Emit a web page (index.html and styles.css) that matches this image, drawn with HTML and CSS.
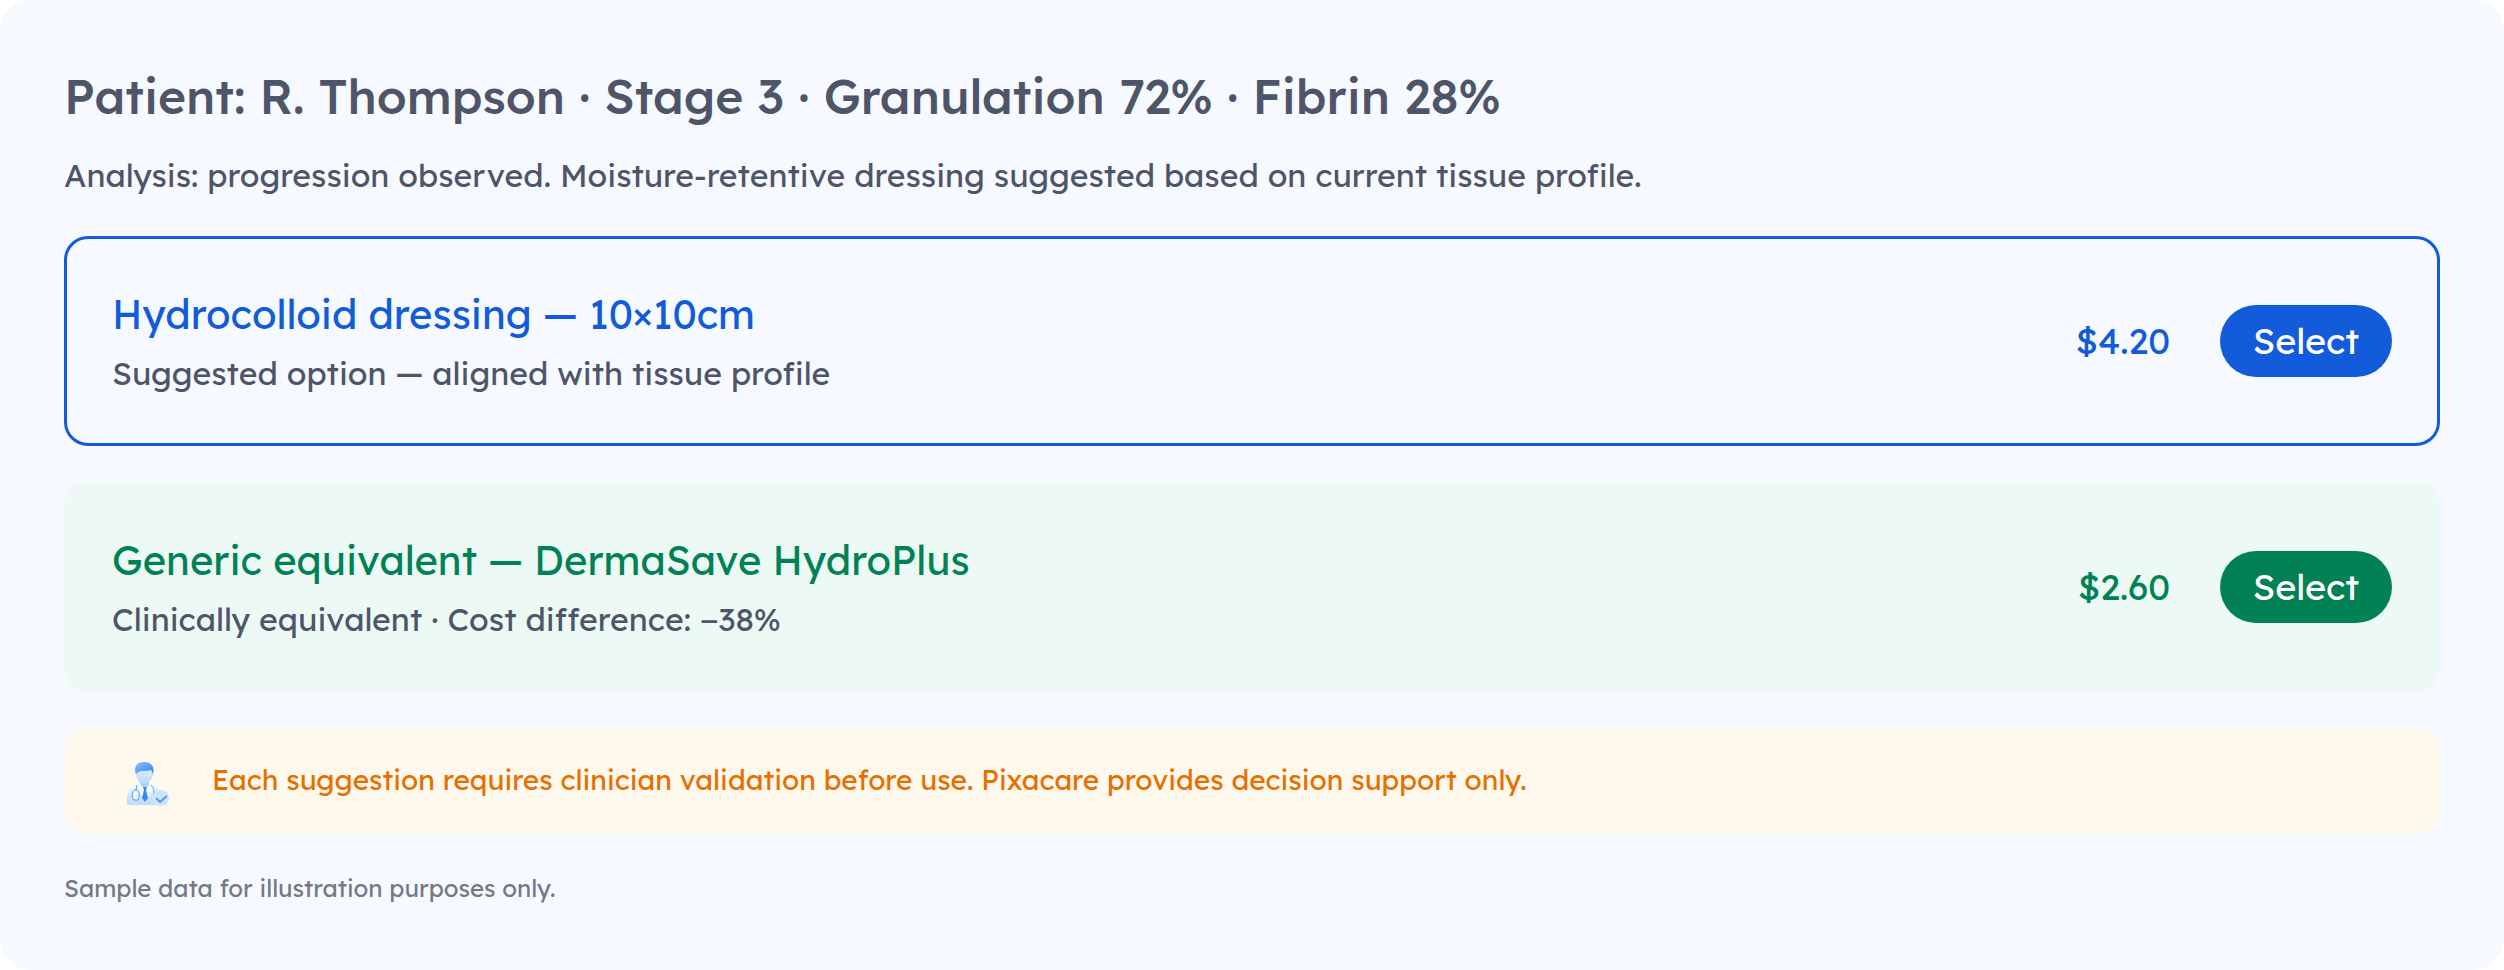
FILE: index.html
```html
<!DOCTYPE html>
<html lang="en">
<head>
  <meta charset="UTF-8" />
  <meta name="viewport" content="width=device-width, initial-scale=1.0"/>
  <title>Dressing suggestions</title>
  <link rel="stylesheet" href="styles.css">
</head>
<body>

  <main class="panel">
    <h1>Patient: R. Thompson · Stage 3 · Granulation 72% · Fibrin 28%</h1>
    <p class="analysis">Analysis: progression observed. Moisture-retentive dressing suggested based on current tissue profile.</p>

    <div class="options">
      <section class="option suggested">
        <div class="details">
          <h2>Hydrocolloid dressing — 10×10cm</h2>
          <p>Suggested option — aligned with tissue profile</p>
        </div>
        <span class="price">$4.20</span>
        <button type="button">Select</button>
      </section>

      <section class="option generic">
        <div class="details">
          <h2>Generic equivalent — DermaSave HydroPlus</h2>
          <p>Clinically equivalent · Cost difference: −38%</p>
        </div>
        <span class="price">$2.60</span>
        <button type="button">Select</button>
      </section>

      <div class="notice">
        <svg class="doctor" viewBox="0 0 44 44" aria-hidden="true">
          <defs>
            <linearGradient id="hair" x1="0" y1="0" x2="1" y2="1">
              <stop offset="0" stop-color="#8cc0ff"/>
              <stop offset="1" stop-color="#2f80f5"/>
            </linearGradient>
            <linearGradient id="skin" x1="0" y1="0" x2="0" y2="1">
              <stop offset="0" stop-color="#e8f3ff"/>
              <stop offset="1" stop-color="#b4d8ff"/>
            </linearGradient>
            <linearGradient id="coat" x1="0" y1="0" x2="0" y2="1">
              <stop offset="0" stop-color="#eaf4ff"/>
              <stop offset="1" stop-color="#bbdcff"/>
            </linearGradient>
          </defs>
          <path d="M1 43C0 34 2 27 8 25l7-3h8l7 3c5 2 7 9 6 18z" fill="url(#coat)"/>
          <path d="M14 17h9v6l-4 4-5-4z" fill="#a5cfff"/>
          <path d="M10 11c0-5 3-8 8-8s9 3 9 8c1 0 1 4-1 4-1 4-4 7-8 7-5 0-8-5-8-11z" fill="url(#skin)"/>
          <path d="M10 12C7 5 11 0 18 0c7 0 11 4 9 12l-2-4c-4 2-11-1-15 4z" fill="url(#hair)"/>
          <path d="M14 22l5 5 5-5 2 7-7 10-7-10z" fill="#f4f9ff"/>
          <path d="M17 25h4l-1 3 2 8-3 4-3-4 2-8z" fill="#3988ef"/>
          <path d="M11 23l-1 5m15-5c3 3 3 6 3 10" fill="none" stroke="#65a6f5" stroke-width="1"/>
          <path d="M8 38c-3-3-2-10 2-10s4 7 2 10z" fill="#eef7ff" stroke="#4f99f2" stroke-width="1"/>
          <circle cx="35" cy="36" r="8" fill="#cde4ff"/>
          <path d="M30 36l4 4 7-6" fill="none" stroke="#5797e8" stroke-width="2"/>
        </svg>
        <p>Each suggestion requires clinician validation before use. Pixacare provides decision support only.</p>
      </div>
    </div>

    <p class="footnote">Sample data for illustration purposes only.</p>
  </main>

</body>
</html>
```

FILE: styles.css
```css
* {
  box-sizing: border-box;
}

body {
  margin: 0;
  background-color: white;
  font-family: Lexend, Inter, sans-serif;
  color: #4f5568;
}

h1, h2, p {
  margin: 0;
}

.panel {
  min-height: 100vh;
  padding: 64px 64px 60px;
  border-radius: 32px;
  background-color: #f6f9ff;
}

h1 {
  font-size: 48px;
  line-height: 64px;
  font-weight: 500;
}

.analysis {
  margin-top: 20px;
  font-size: 32px;
  line-height: 54px;
}

.options {
  display: flex;
  flex-direction: column;
  gap: 36px;
  margin-top: 34px;
}

.option {
  display: flex;
  align-items: center;
  padding: 45px;
  border: 3px solid transparent;
  border-radius: 24px;
}

.details {
  flex: 1;
}

.option h2 {
  margin-bottom: 4px;
  font-size: 40px;
  line-height: 60px;
  font-weight: 400;
}

.option p {
  font-size: 32px;
  line-height: 50px;
}

.price {
  margin-right: 50px;
  padding-bottom: 2px;
  font-size: 36px;
}

.option button {
  width: 172px;
  height: 72px;
  padding: 0 0 2px;
  border: none;
  border-radius: 36px;
  color: white;
  font-family: inherit;
  font-size: 36px;
  cursor: pointer;
}

.suggested {
  border-color: #125cdb;
}

.suggested h2,
.suggested .price {
  color: #125cdb;
}

.suggested button {
  background-color: #125cdb;
}

.generic {
  background-color: #ecf9f4;
}

.generic h2,
.generic .price {
  color: #028254;
}

.generic button {
  background-color: #028254;
}

.notice {
  display: flex;
  align-items: flex-start;
  gap: 42px;
  padding: 30px 62px 28px;
  border-radius: 24px;
  background-color: #fff8ec;
  color: #e76f00;
  font-size: 28px;
  line-height: 44px;
}

.doctor {
  width: 44px;
  height: 44px;
  margin-top: 4px;
}

.footnote {
  margin-top: 34px;
  color: #747887;
  font-size: 24px;
  line-height: 40px;
}
```
